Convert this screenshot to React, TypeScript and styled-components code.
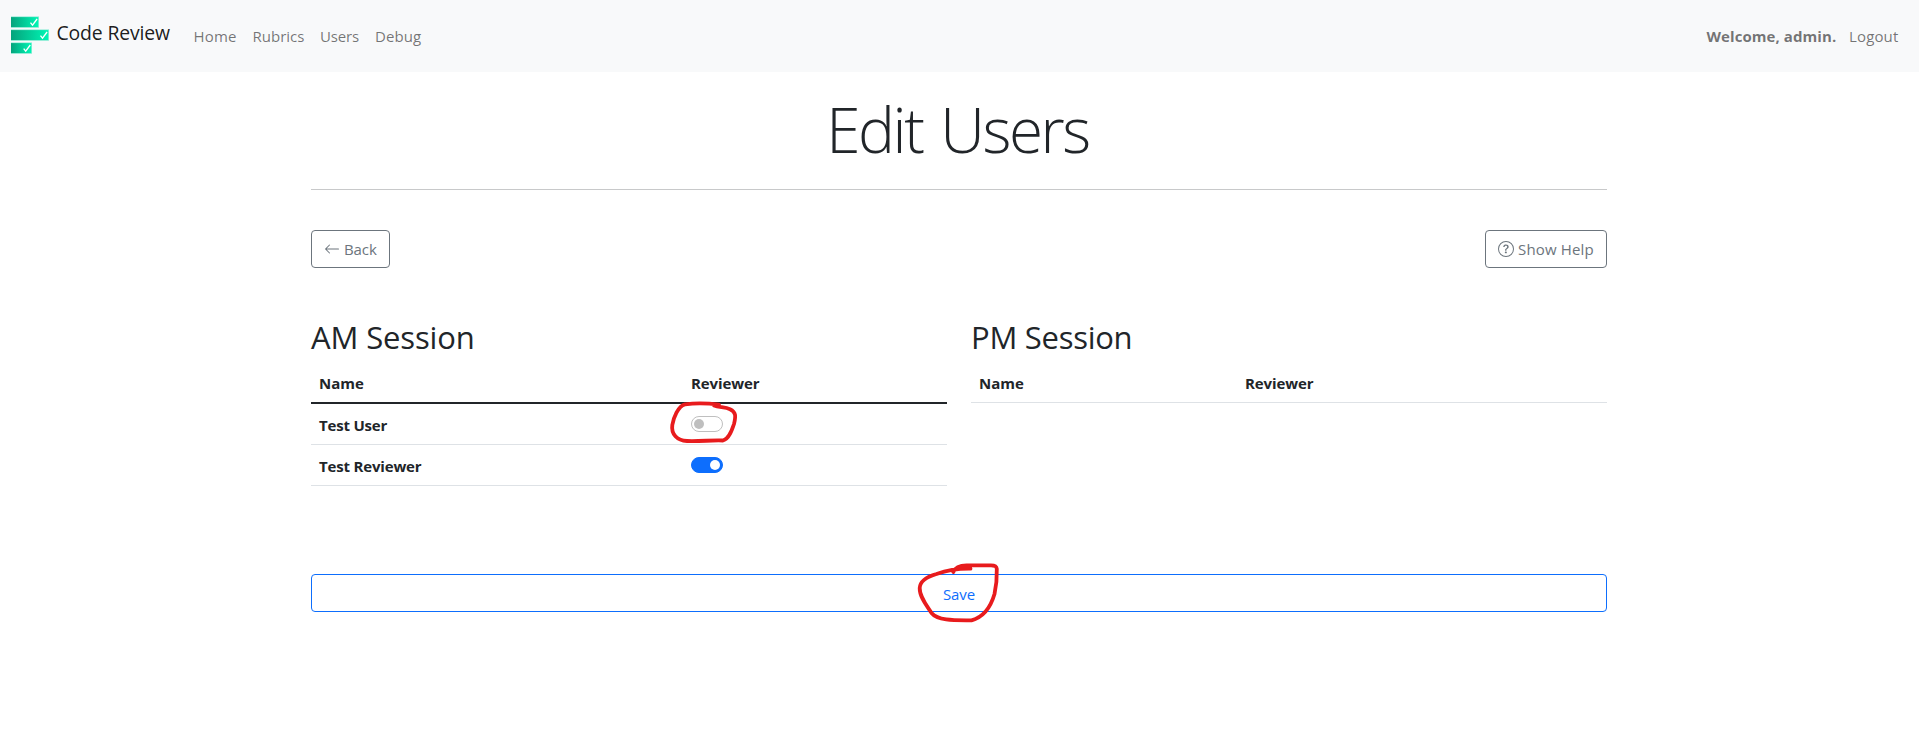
import React from "react";
import styled, { createGlobalStyle, css } from "styled-components";
import { BsArrowLeft, BsQuestionCircle } from "react-icons/bs";

const GlobalStyle = createGlobalStyle`
  *, *::before, *::after { box-sizing: border-box; }
  body {
    margin: 0;
    background: #fff;
    color: #212529;
    font-family: "Open Sans", "Noto Sans", sans-serif;
    font-size: 15px;
    line-height: 24px;
  }
`;

const Page = styled.div`
  position: relative;
  min-height: 732px;
`;

const Navbar = styled.nav`
  display: flex;
  align-items: center;
  height: 72px;
  padding: 0 12px 0 11px;
  background: #f8f9fa;
`;

const Brand = styled.a`
  display: flex;
  align-items: flex-start;
  width: 174.5px;
  height: 40px;
  color: rgba(0, 0, 0, 0.9);
  font-size: 19.4px;
  line-height: 30px;
  letter-spacing: -0.14px;
  white-space: nowrap;
`;

const Logo = styled.svg`
  flex: none;
  width: 39px;
  height: 40px;
  margin-right: 6.5px;
`;

const BrandText = styled.span`
  padding-top: 2px;
`;

const NavItem = styled.a<{ $width: number; $spacing: number; $bold?: boolean }>`
  width: ${(p) => p.$width}px;
  padding-left: 8px;
  color: rgba(0, 0, 0, 0.55);
  font-weight: ${(p) => (p.$bold ? 700 : 400)};
  letter-spacing: ${(p) => p.$spacing}px;
  white-space: nowrap;
`;

const NavEnd = styled.div`
  display: flex;
  margin-left: auto;
`;

const Container = styled.main`
  width: 1296px;
  margin: 0 auto 0 311px;
`;

const Title = styled.h1`
  margin: 0;
  padding: 19px 3px 0 0;
  height: 118px;
  border-bottom: 1px solid #c8c9ca;
  font-size: 62px;
  font-weight: 300;
  line-height: 77px;
  letter-spacing: -2.4px;
  word-spacing: 4px;
  text-align: center;
`;

const Actions = styled.div`
  display: flex;
  justify-content: space-between;
  margin-top: 40px;
`;

const Button = styled.button<{ $width?: number; $spacing: number; $primary?: boolean }>`
  display: flex;
  align-items: center;
  gap: 4px;
  height: 38px;
  padding: 0 0 0 12px;
  width: ${(p) => (p.$width ? `${p.$width}px` : "100%")};
  border: 1px solid currentColor;
  border-radius: 4px;
  background: transparent;
  color: #6c757d;
  font: inherit;
  letter-spacing: ${(p) => p.$spacing}px;
  white-space: nowrap;
  ${(p) =>
    p.$primary &&
    css`
      justify-content: center;
      padding: 2px 0 0;
      margin-top: 88px;
      color: #0d6efd;
    `}
  svg {
    flex: none;
    width: 16px;
    height: 16px;
  }
`;

const Sessions = styled.div`
  display: grid;
  grid-template-columns: 636px 636px;
  gap: 24px;
  height: 168px;
  margin-top: 50px;
`;

const SessionTitle = styled.h2<{ $spacing: number }>`
  margin: 0 0 6px;
  font-size: 31px;
  font-weight: 400;
  line-height: 38px;
  letter-spacing: ${(p) => p.$spacing}px;
`;

const Row = styled.div<{ $name: number; $strong?: boolean }>`
  display: grid;
  grid-template-columns: ${(p) => p.$name}px 1fr;
  height: ${(p) => (p.$strong ? 42 : 41)}px;
  padding-top: 8px;
  border-bottom: ${(p) => (p.$strong ? "2px solid #212529" : "1px solid #dee2e6")};
`;

const Cell = styled.div<{ $spacing?: number }>`
  padding: 1px 0 0 8px;
  font-weight: 700;
  letter-spacing: ${(p) => p.$spacing ?? 0}px;
`;

const Switch = styled.span<{ $on?: boolean }>`
  display: flex;
  align-items: center;
  justify-content: ${(p) => (p.$on ? "flex-end" : "flex-start")};
  width: 32px;
  height: 16px;
  margin-top: 3px;
  padding: 0 1.75px;
  border: 1px solid ${(p) => (p.$on ? "#0d6efd" : "#bfbfbf")};
  border-radius: 16px;
  background: ${(p) => (p.$on ? "#0d6efd" : "#fff")};
  &::after {
    content: "";
    width: 10.5px;
    height: 10.5px;
    border-radius: 50%;
    background: ${(p) => (p.$on ? "#fff" : "#bfbfbf")};
  }
`;

const Marks = styled.svg`
  position: absolute;
  left: 660px;
  top: 390px;
  pointer-events: none;
  fill: none;
  stroke: #e81b1d;
  stroke-width: 3.8;
  stroke-linecap: round;
  stroke-linejoin: round;
`;

const bars = [
  { y: 0.3, w: 28, check: 19.5 },
  { y: 13.3, w: 38, check: 29.5 },
  { y: 26.3, w: 21, check: 12.7 },
];

export default function App() {
  return (
    <Page>
      <GlobalStyle />
      <Navbar>
        <Brand>
          <Logo viewBox="0 0 39 40">
            <defs>
              <linearGradient id="bar" x1="0" x2="1">
                <stop offset="0" stopColor="#05a37c" />
                <stop offset="1" stopColor="#00f5b4" />
              </linearGradient>
            </defs>
            {bars.map((b) => (
              <g key={b.y}>
                <rect x="0" y={b.y} width={b.w} height="11.6" fill="#9feedb" />
                <rect x="0" y={b.y + 0.8} width={b.w - 0.7} height="10" fill="url(#bar)" />
                <path
                  d={`M${b.check} ${b.y + 6.4}l2 2.5 4.6 -6.2`}
                  fill="none"
                  stroke="#fff"
                  strokeWidth="1.3"
                />
              </g>
            ))}
          </Logo>
          <BrandText>Code Review</BrandText>
        </Brand>
        <NavItem $width={59} $spacing={0.15}>Home</NavItem>
        <NavItem $width={67.5} $spacing={0}>Rubrics</NavItem>
        <NavItem $width={55} $spacing={-0.15}>Users</NavItem>
        <NavItem $width={62} $spacing={0.1}>Debug</NavItem>
        <NavEnd>
          <NavItem $width={142.5} $spacing={0.07} $bold>Welcome, admin.</NavItem>
          <NavItem $width={66} $spacing={0.15}>Logout</NavItem>
        </NavEnd>
      </Navbar>
      <Container>
        <Title>Edit Users</Title>
        <Actions>
          <Button $width={79} $spacing={-0.1}>
            <BsArrowLeft />
            Back
          </Button>
          <Button $width={122} $spacing={0.15}>
            <BsQuestionCircle />
            Show Help
          </Button>
        </Actions>
        <Sessions>
          <section>
            <SessionTitle $spacing={-0.13}>AM Session</SessionTitle>
            <Row $name={372} $strong>
              <Cell $spacing={0}>Name</Cell>
              <Cell $spacing={-0.1}>Reviewer</Cell>
            </Row>
            <Row $name={372}>
              <Cell $spacing={-0.2}>Test User</Cell>
              <Cell><Switch /></Cell>
            </Row>
            <Row $name={372}>
              <Cell $spacing={-0.17}>Test Reviewer</Cell>
              <Cell><Switch $on /></Cell>
            </Row>
          </section>
          <section>
            <SessionTitle $spacing={-0.27}>PM Session</SessionTitle>
            <Row $name={266}>
              <Cell $spacing={0}>Name</Cell>
              <Cell $spacing={-0.1}>Reviewer</Cell>
            </Row>
          </section>
        </Sessions>
        <Button $primary $spacing={-0.1}>Save</Button>
      </Container>
      <Marks width="350" height="240" viewBox="660 390 350 240">
        <path d="M719 404.7C706 403 694 403.2 685 404.3C678 406 673.5 418 672.3 425C671 434 677 440.5 687 441C700 441.5 712 440 723 440.5C729 439 732 430 734 424C736 416 736 412 730 409.2C725 407 719 407.5 714 405.5" />
        <path d="M970.5 568.7C955 568.5 945 571 936.5 574C926 577 920 582 919.7 588C919.5 597 927 606 931.5 613C938 621 955 620.3 971.5 620.3C984 617 991 606 994.5 594C996.5 585 997 577 996.8 569C996.5 566 995 565.4 991 565.4L966.5 565.4C960 565.5 955 568 953.3 572" />
      </Marks>
    </Page>
  );
}
